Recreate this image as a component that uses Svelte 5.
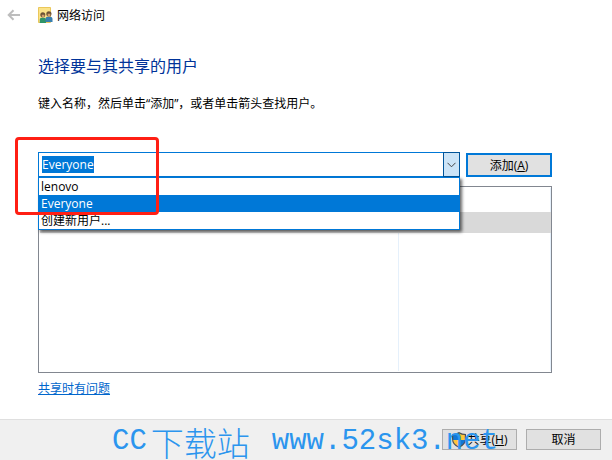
<script lang="ts">
	import { onMount } from 'svelte';

	let field: HTMLInputElement;
	let name = $state('Everyone');
	let open = $state(true);

	const options = ['lenovo', 'Everyone', '创建新用户...'];

	function choose(option: string) {
		name = option;
		open = false;
	}

	onMount(() => {
		field.focus();
		field.select();
	});
</script>

<div class="wizard">
	<header>
		<button type="button" class="back" aria-label="返回">
			<svg width="14" height="12" viewBox="0 0 14 12" fill="none" stroke="#bdbdbd" stroke-width="2">
				<path d="M13 6H2M6.500 1.200L1.700 6l4.800 4.800" />
			</svg>
		</button>
		<svg width="15" height="17" viewBox="0 0 15 17">
			<path d="M.5.5h12v15H.5z" fill="#fbe389" stroke="#eac75a" />
			<path d="M1.800 16v-3.200q0-2.300 3-2.300t3.200 2.300V16z" fill="#2f9468" />
			<circle cx="4.800" cy="7.800" r="2.500" fill="#6d5334" />
			<path d="M3.800 7.800h2.600v1.800l-1.300 1.200-1.300-1.200z" fill="#d3a070" />
			<path d="M7.600 15v-3.200q0-2.300 3.300-2.300t3.600 2.300V15z" fill="#397fae" />
			<circle cx="10.900" cy="6.800" r="2.600" fill="#6d5334" />
			<path d="M9.700 6.800h2.600v1.900l-1.300 1.200-1.300-1.200z" fill="#d3a070" />
		</svg>
		<span>网络访问</span>
	</header>

	<main>
		<h1>选择要与其共享的用户</h1>
		<label for="user-name">键入名称，然后单击“添加”，或者单击箭头查找用户。</label>

		<div class="picker">
			<div class="combo">
				<input
					id="user-name"
					type="text"
					role="combobox"
					aria-expanded={open}
					aria-controls="user-options"
					autocomplete="off"
					spellcheck="false"
					bind:this={field}
					bind:value={name}
				/>
				<button type="button" class="arrow" aria-label="展开" onclick={() => (open = !open)}>
					<svg width="9" height="6" viewBox="0 0 9 6" fill="none" stroke="#444">
						<path d="M.5.8l4 4 4-4" />
					</svg>
				</button>
				{#if open}
					<div class="options" id="user-options" role="listbox">
						{#each options as option}
							<button
								type="button"
								role="option"
								aria-selected={option === name}
								class:active={option === name}
								onclick={() => choose(option)}>{option}</button
							>
						{/each}
					</div>
				{/if}
			</div>
			<button type="button" class="add">添加(<u>A</u>)</button>
			<div class="marker"></div>
		</div>

		<div class="list">
			<table aria-label="共享用户">
				<tbody>
					<tr class="head"><td></td><td></td></tr>
					<tr class="selected"><td></td><td></td></tr>
					<tr class="rest"><td></td><td></td></tr>
				</tbody>
			</table>
		</div>

		<a href="#help">共享时有问题</a>
	</main>

	<footer>
		<button type="button">
			<svg width="14" height="16" viewBox="0 0 14 16">
				<path d="M7 0Q4 2 0 2v5q0 6 7 9 7-3 7-9V2Q10 2 7 0z" fill="#4a4f55" />
				<path d="M7 1.400Q4.400 3 1.200 3.100V8H7z" fill="#1277d3" />
				<path d="M7 1.400Q9.600 3 12.800 3.100V8H7z" fill="#ffc53a" />
				<path d="M1.200 8H7v6.700Q1.700 12.200 1.200 8z" fill="#ffc53a" />
				<path d="M12.800 8H7v6.700Q12.300 12.200 12.800 8z" fill="#1277d3" />
			</svg>
			<span>共享(<u>H</u>)</span>
		</button>
		<button type="button">取消</button>
		<div class="watermark">
			<span>CC</span>
			<span class="han">下载站</span>
			<span>www.52sk3.net</span>
		</div>
	</footer>
</div>

<style>
	:global(body) {
		background: #fff;
	}

	.wizard {
		display: flex;
		flex-direction: column;
		min-height: 100vh;
		overflow: hidden;
		color: #000;
		font: 12px/17px 'Open Sans', 'Noto Sans CJK SC', sans-serif;
	}

	button,
	input {
		box-sizing: border-box;
		margin: 0;
		padding: 0;
		font: inherit;
		color: inherit;
		border-radius: 0;
		outline: none;
	}

	header {
		display: flex;
		align-items: center;
		height: 30px;
		padding-left: 7px;
	}

	header span {
		margin-left: 4px;
	}

	.back {
		display: flex;
		width: 31px;
		border: 0;
		background: none;
	}

	main {
		display: flex;
		flex: 1;
		flex-direction: column;
		padding: 24px 60px 0 38px;
	}

	h1 {
		margin: 0 0 17px;
		color: #003399;
		font-size: 16px;
		font-weight: 400;
		line-height: 24px;
	}

	.picker {
		position: relative;
		display: flex;
		align-items: flex-end;
		gap: 6px;
		margin-top: 40px;
	}

	.combo {
		position: relative;
		display: flex;
		flex: 1;
		height: 25px;
	}

	.combo input {
		flex: 1;
		min-width: 0;
		padding: 0 3px;
		border: 1px solid #0078d7;
		border-right: 0;
		background: #fff;
	}

	.combo input::selection {
		background: #0078d7;
		color: #fff;
	}

	.arrow {
		display: flex;
		align-items: center;
		justify-content: center;
		width: 17px;
		border: 1px solid #005499;
		background: #cce4f7;
	}

	.options {
		position: absolute;
		top: 100%;
		left: 0;
		right: 0;
		z-index: 1;
		display: flex;
		flex-direction: column;
		border: 1px solid #0078d7;
		background: #fff;
		box-shadow: 2px 2px 3px rgba(0, 0, 0, 0.6);
	}

	.options button {
		height: 17px;
		padding: 0 2px;
		border: 0;
		background: none;
		text-align: left;
	}

	.options .active {
		background: #0078d7;
		color: #fff;
	}

	.add {
		width: 86px;
		height: 24px;
		border: 2px solid #0078d7;
		background: #e1e1e1;
	}

	/* red frame drawn over the name field and the first options */
	.marker {
		position: absolute;
		top: -15px;
		left: -23px;
		z-index: 2;
		box-sizing: border-box;
		width: 144px;
		height: 78px;
		border: 3px solid #ff1f14;
		border-radius: 4px;
		pointer-events: none;
	}

	.list {
		margin-top: 9px;
		padding: 1px 0 1px 1px;
		border: 1px solid #828790;
	}

	table {
		width: 100%;
		border-spacing: 0;
		table-layout: fixed;
	}

	td {
		padding: 0;
		border-right: 1px solid #e5f0fb;
	}

	td:first-child {
		width: 70%;
	}

	.head td {
		height: 24px;
	}

	.selected td {
		height: 21px;
		border-color: #d9d9d9;
		background: #d9d9d9;
	}

	.rest td {
		height: 138px;
	}

	a {
		align-self: flex-start;
		margin: 7px 0 22px;
		color: #0066cc;
	}

	footer {
		position: relative;
		display: flex;
		justify-content: flex-end;
		gap: 9px;
		padding: 9px 11px 10px;
		border-top: 1px solid #dfdfdf;
		background: #f0f0f0;
	}

	footer button {
		display: flex;
		align-items: center;
		justify-content: center;
		gap: 2px;
		width: 75px;
		height: 21px;
		border: 1px solid #adadad;
		background: #e1e1e1;
	}

	.watermark {
		position: absolute;
		top: 4px;
		left: 112px;
		display: flex;
		align-items: center;
		gap: 4px;
		color: #2b95ee;
		font: 29px/36px 'Liberation Mono', monospace;
		white-space: nowrap;
		pointer-events: none;
	}

	.han {
		margin-right: 18px;
		font-family: 'Noto Sans CJK SC', sans-serif;
		font-size: 33px;
		font-weight: 300;
	}
</style>
